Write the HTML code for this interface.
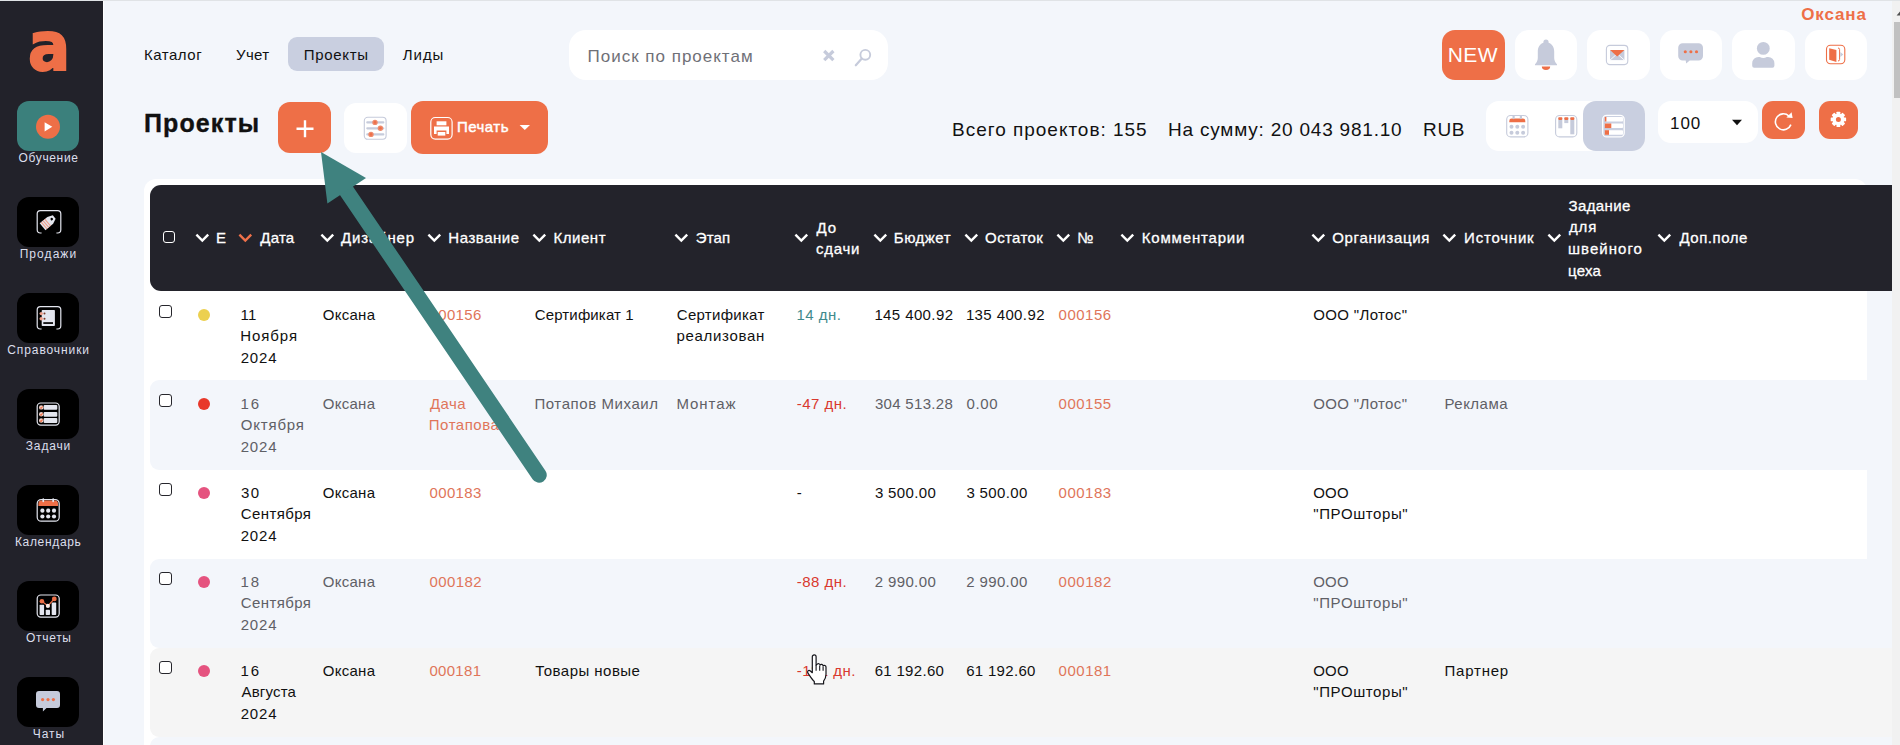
<!DOCTYPE html>
<html lang="ru"><head><meta charset="utf-8"><title>Проекты</title>
<style>
*{box-sizing:border-box}
html,body{margin:0;padding:0}
body{width:1900px;height:745px;overflow:hidden;position:relative;background:#f3f6fb;font-family:"Liberation Sans", sans-serif;}
.app{position:absolute;left:0;top:0;width:1900px;height:745px;overflow:hidden}
.topline{position:absolute;left:0;top:0;width:1900px;height:1px;background:#e0e3e6;z-index:5}
.t{position:absolute;white-space:pre;display:block}
.abs{position:absolute;display:block}
.logo{position:absolute;display:block;font-family:"DejaVu Sans","Liberation Sans",sans-serif;font-weight:700;transform:scaleX(.92);transform-origin:0 0}
.sidebar{position:absolute;left:0;top:0;width:104px;height:745px;background:#22222a;border-right:1px solid #fff}
.tile{position:absolute;left:17px;width:62px;height:50px;border-radius:12px;display:block}
.tile svg{display:block}
.pill{position:absolute;background:#c9cfe0;border-radius:9px;display:block}
.search{position:absolute;background:#fff;border-radius:17px}
.btn{position:absolute;display:block}
.btn.o{background:#ee6f47}
.btn.w{background:#fff}
.card{position:absolute;background:#fff;border-radius:12px}
.thead{position:absolute;background:#23232b;border-radius:11px 0 0 11px}
.row{position:absolute;left:150px;width:1742px;border-radius:9px 0 0 9px}
.cb{position:absolute;width:13px;height:12.500px;border:1.600px solid #26262c;border-radius:3px;background:#fff;display:block}
.cb.h{width:12.400px;height:12px;border:1.200px solid #fff;background:transparent}
.dot{position:absolute;width:12px;height:12px;border-radius:50%;display:block}
.sbar{position:absolute;left:1892px;top:0;width:8px;height:745px;background:#f1f1f1}
.sbar i{position:absolute;left:2px;top:22px;width:6px;height:76px;background:#c1c1c1;display:block}
</style></head>
<body><div class="app"><div class="topline"></div>
<header class="topbar">
<nav>
<span class="t" style="left:144.0px;top:44px;font-size:15px;line-height:21px;color:#111;letter-spacing:0.52px;">Каталог</span>
<span class="t" style="left:236.1px;top:44px;font-size:15px;line-height:21px;color:#111;letter-spacing:0.30px;">Учет</span>
<span class="pill" style="left:288px;top:37px;width:96px;height:34px"></span>
<span class="t" style="left:303.8px;top:44px;font-size:15px;line-height:21px;color:#111;letter-spacing:0.69px;">Проекты</span>
<span class="t" style="left:402.8px;top:44px;font-size:15px;line-height:21px;color:#111;letter-spacing:0.94px;">Лиды</span>
</nav>
<div class="search" style="left:569px;top:30px;width:319px;height:50px">
</div>
<span class="t" style="left:587.6px;top:45px;font-size:17px;line-height:23px;color:#6f7077;letter-spacing:0.99px;">Поиск по проектам</span>
<svg class="abs" style="left:820px;top:47px" width="18" height="18" viewBox="0 0 18 18"><path d="M4.2 4 L13.4 13.2 M13.4 4 L4.2 13.2" stroke="#c6cbdb" stroke-width="3.2"/></svg>
<svg class="abs" style="left:852px;top:45px" width="24" height="24" viewBox="0 0 24 24"><circle cx="13.3" cy="9.8" r="4.9" fill="none" stroke="#c6cbdb" stroke-width="1.9"/><path d="M9.8 13.6 L3.8 20.3" stroke="#c6cbdb" stroke-width="2.2" stroke-linecap="round"/></svg>
<span class="t" style="left:1801.3px;top:3px;font-size:17px;line-height:23px;font-weight:700;color:#ee6f47;letter-spacing:0.85px;">Оксана</span>
<a class="btn o" style="left:1442px;top:30px;width:63px;height:50px;border-radius:13px"></a>
<span class="t" style="left:1447.8px;top:41px;font-size:21px;line-height:27px;color:#fff;letter-spacing:0.40px;">NEW</span>
<a class="btn w" style="left:1514.5px;top:30px;width:62.5px;height:50px;border-radius:14px"></a>
<a class="btn w" style="left:1587px;top:30px;width:62.5px;height:50px;border-radius:14px"></a>
<a class="btn w" style="left:1659.5px;top:30px;width:62.5px;height:50px;border-radius:14px"></a>
<a class="btn w" style="left:1732px;top:30px;width:62.5px;height:50px;border-radius:14px"></a>
<a class="btn w" style="left:1804.5px;top:30px;width:62.5px;height:50px;border-radius:14px"></a>
<svg class="abs" style="left:1530px;top:36px" width="32" height="38" viewBox="0 0 32 38"><path d="M16 3.6 a2.6 2.6 0 0 1 2.6 2.6 v.5 c3.6 1.3 5.6 4.6 5.6 8.8 v6.5 c0 2.6 1.2 4.6 2.8 6.3 v.9 h-22 v-.9 c1.6 -1.7 2.8 -3.7 2.8 -6.3 v-6.5 c0 -4.2 2 -7.5 5.6 -8.8 v-.5 a2.6 2.6 0 0 1 2.6 -2.6 z" fill="#c6cbdb"/><path d="M11.8 30.6 h8.4 a4.2 3.4 0 0 1 -8.4 0 z" fill="#ee6f47"/></svg>
<svg class="abs" style="left:1604px;top:43px" width="26" height="24" viewBox="0 0 26 24"><rect x="2.4" y="2.4" width="21.4" height="19.2" rx="3.5" fill="none" stroke="#c6cbdb" stroke-width="1.1"/><rect x="6" y="7.3" width="14.4" height="9.8" fill="#c6cbdb"/><path d="M6 17.1 L11.8 12 M20.4 17.1 L14.6 12" stroke="#fff" stroke-width=".9"/><path d="M6 7.1 h14.4 L13.2 13.4 z" fill="#ee6f47"/></svg>
<svg class="abs" style="left:1676px;top:41px" width="30" height="26" viewBox="0 0 30 26"><path d="M6.7 2.2 h15.8 a4.5 4.5 0 0 1 4.5 4.5 v8.3 a4.5 4.5 0 0 1 -4.5 4.5 h-8.8 l-3.5 3 l-.5 -3 h-3 a4.5 4.5 0 0 1 -4.5 -4.5 v-8.3 a4.5 4.5 0 0 1 4.5 -4.5 z" fill="#c6cbdb"/><circle cx="9.3" cy="10.8" r="1.55" fill="#ee6f47"/><circle cx="14.9" cy="10.8" r="1.55" fill="#ee6f47"/><circle cx="20.5" cy="10.8" r="1.55" fill="#ee6f47"/></svg>
<svg class="abs" style="left:1750px;top:40px" width="28" height="30" viewBox="0 0 28 30"><circle cx="13.3" cy="8.4" r="6.4" fill="#c6cbdb"/><path d="M4.2 27.7 a2 2 0 0 1 -2 -2 v-2.5 a6.3 6.3 0 0 1 6.3 -6.3 h1.3 a7 7 0 0 0 7 0 h1.3 a6.3 6.3 0 0 1 6.3 6.3 v2.5 a2 2 0 0 1 -2 2 z" fill="#c6cbdb" /></svg>
<svg class="abs" style="left:1824px;top:43px" width="24" height="24" viewBox="0 0 24 24"><rect x="2.5" y="2.3" width="18.3" height="18.5" rx="4" fill="none" stroke="#ee6f47" stroke-width="1.1"/><path d="M14 5 a1.6 1.6 0 0 1 1.6 1.6 v9.8 a1.6 1.6 0 0 1 -1.6 1.6" fill="none" stroke="#ee6f47" stroke-width="1"/><path d="M5.2 5.3 l7.2 1.7 v12 l-7.2 -2.3 z" fill="#ee6f47"/><path d="M16.3 9 l3 2.5 l-3 2.5 z" fill="#c6cbdb"/></svg>
</header>
<section class="toolbar">
<span class="t h1" style="left:144.0px;top:107px;font-size:25px;line-height:32px;font-weight:700;color:#111;letter-spacing:1.10px;-webkit-text-stroke:.35px #111;">Проекты</span>
<a class="btn o" style="left:278px;top:102px;width:53px;height:51px;border-radius:12px"></a>
<svg class="abs" style="left:294px;top:118px" width="22" height="22" viewBox="0 0 22 22"><path d="M11 2.3 v17 M2.5 10.8 h17" stroke="#fff" stroke-width="2.4"/></svg>
<a class="btn w" style="left:344px;top:103px;width:63px;height:50px;border-radius:12px"></a>
<svg class="abs" style="left:362px;top:115px" width="26" height="26" viewBox="0 0 26 26"><rect x="2.3" y="2.3" width="21.8" height="22" rx="3.5" fill="none" stroke="#c6cbdb" stroke-width="1.1"/><path d="M5.3 7.4 h16 M5.3 13.3 h16 M5.3 19.4 h16" stroke="#c6cbdb" stroke-width="2.2" stroke-linecap="round"/><circle cx="13" cy="7.4" r="2.7" fill="#ee8a6c"/><circle cx="18.4" cy="13.3" r="2.7" fill="#ee8a6c"/><circle cx="9" cy="19.4" r="2.7" fill="#ee8a6c"/><circle cx="13" cy="7.4" r="1.3" fill="#ee6f47"/><circle cx="18.4" cy="13.3" r="1.3" fill="#ee6f47"/><circle cx="9" cy="19.4" r="1.3" fill="#ee6f47"/></svg>
<a class="btn o" style="left:411px;top:101px;width:137px;height:53px;border-radius:12px"></a>
<svg class="abs" style="left:428px;top:115px" width="26" height="26" viewBox="0 0 26 26"><rect x="2.8" y="2.5" width="21.3" height="21.6" rx="4.5" fill="none" stroke="#fff" stroke-width="1.2"/><rect x="8.6" y="6.3" width="9.8" height="4" fill="#fff"/><path d="M6 11.6 h15 v7.3 h-2.6 v-3.4 h-9.8 v3.4 h-2.6 z" fill="#fff"/><rect x="9.7" y="17" width="7.6" height="3.6" fill="#fff"/></svg>
<span class="t" style="left:456.9px;top:116px;font-size:15px;line-height:21px;color:#fff;letter-spacing:0.50px;-webkit-text-stroke:.45px #fff;">Печать</span>
<svg class="abs" style="left:518px;top:123px" width="14" height="9" viewBox="0 0 14 9"><path d="M1.6 2 h10.4 l-5.2 5 z" fill="#fff"/></svg>
<span class="t" style="left:952.0px;top:117px;font-size:19px;line-height:25px;color:#111;letter-spacing:0.98px;">Всего проектов: 155</span>
<span class="t" style="left:1168.0px;top:117px;font-size:19px;line-height:25px;color:#111;letter-spacing:0.79px;">На сумму: 20 043 981.10</span>
<span class="t" style="left:1423.0px;top:117px;font-size:19px;line-height:25px;color:#111;letter-spacing:0.67px;">RUB</span>
<div class="btn w" style="left:1486px;top:101px;width:159px;height:50px;border-radius:13px"></div>
<a class="pill" style="left:1583px;top:101px;width:62px;height:50px;border-radius:13px"></a>
<svg class="abs" style="left:1504px;top:113px" width="26" height="26" viewBox="0 0 26 26"><rect x="2.7" y="2.5" width="21.2" height="21.4" rx="4" fill="none" stroke="#c6cbdb" stroke-width="1.1"/><path d="M5.3 9.3 v-1.3 a2.4 2.4 0 0 1 2.4 -2.4 h11.2 a2.4 2.4 0 0 1 2.4 2.4 v1.3 z" fill="#ee6f47"/><rect x="8.5" y="2" width="2.2" height="4.2" rx="1.1" fill="#c6cbdb"/><rect x="15.8" y="2" width="2.2" height="4.2" rx="1.1" fill="#c6cbdb"/><circle cx="7.5" cy="13.8" r="2" fill="#c6cbdb"/><circle cx="13.3" cy="13.8" r="2" fill="#c6cbdb"/><circle cx="19.1" cy="13.8" r="2" fill="#c6cbdb"/><circle cx="7.5" cy="19.8" r="2" fill="#c6cbdb"/><circle cx="13.3" cy="19.8" r="2" fill="#c6cbdb"/><circle cx="19.1" cy="19.8" r="2" fill="#c6cbdb"/></svg>
<svg class="abs" style="left:1553px;top:113px" width="26" height="26" viewBox="0 0 26 26"><rect x="2.6" y="2.5" width="21.2" height="21.4" rx="4" fill="none" stroke="#c6cbdb" stroke-width="1.1"/><rect x="5.3" y="4.8" width="4" height="10.5" fill="#c6cbdb"/><rect x="11.3" y="4.8" width="4" height="5.3" fill="#c6cbdb"/><rect x="17.3" y="4.8" width="4" height="16.5" fill="#c6cbdb"/><rect x="5.3" y="4.3" width="4" height="2.6" rx=".8" fill="#ee6f47"/><rect x="11.3" y="4.3" width="4" height="2.6" rx=".8" fill="#ee6f47"/><rect x="17.3" y="4.3" width="4" height="2.6" rx=".8" fill="#ee6f47"/></svg>
<svg class="abs" style="left:1600px;top:113px" width="26" height="26" viewBox="0 0 26 26"><rect x="2.7" y="2.3" width="21.5" height="21.6" rx="4" fill="none" stroke="#fff" stroke-width="1.3"/><rect x="4.8" y="3.9" width="18.2" height="4.6" rx=".8" fill="#fff"/><rect x="4.8" y="3.9" width="1.6" height="4.6" fill="#ee6f47"/><rect x="4.8" y="10.5" width="18.2" height="4.6" rx=".8" fill="#fff"/><rect x="4.8" y="10.5" width="6.5" height="4.6" fill="#ee6f47"/><rect x="4.8" y="17.2" width="18.2" height="4.6" rx=".8" fill="#fff"/><rect x="4.8" y="17.2" width="4.2" height="4.6" fill="#ee6f47"/></svg>
<div class="btn w" style="left:1658px;top:101px;width:100px;height:42px;border-radius:13px"></div>
<span class="t" style="left:1670.1px;top:112px;font-size:17px;line-height:23px;color:#111;letter-spacing:0.89px;">100</span>
<svg class="abs" style="left:1730px;top:118px" width="14" height="9" viewBox="0 0 14 9"><path d="M2 1.8 h10 l-5 5.5 z" fill="#111"/></svg>
<a class="btn o" style="left:1762px;top:101px;width:43px;height:38px;border-radius:11px"></a>
<svg class="abs" style="left:1771px;top:109px" width="26" height="26" viewBox="0 0 26 26"><path d="M17.9 7 A8 8 0 1 0 19.9 15.6" fill="none" stroke="#fff" stroke-width="1.6"/><path d="M15.4 8.6 L21.6 9 L20.6 3.2 Z" fill="#fff"/></svg>
<a class="btn o" style="left:1819px;top:101px;width:39px;height:38px;border-radius:11px"></a>
<svg class="abs" style="left:1828px;top:109px" width="22" height="22" viewBox="-11 -11 22 22"><g transform="translate(-.6 -.6)"><rect x="-1.9" y="-7.7" width="3.8" height="4" rx=".6" transform="rotate(0)" fill="#fff"/><rect x="-1.9" y="-7.7" width="3.8" height="4" rx=".6" transform="rotate(45)" fill="#fff"/><rect x="-1.9" y="-7.7" width="3.8" height="4" rx=".6" transform="rotate(90)" fill="#fff"/><rect x="-1.9" y="-7.7" width="3.8" height="4" rx=".6" transform="rotate(135)" fill="#fff"/><rect x="-1.9" y="-7.7" width="3.8" height="4" rx=".6" transform="rotate(180)" fill="#fff"/><rect x="-1.9" y="-7.7" width="3.8" height="4" rx=".6" transform="rotate(225)" fill="#fff"/><rect x="-1.9" y="-7.7" width="3.8" height="4" rx=".6" transform="rotate(270)" fill="#fff"/><rect x="-1.9" y="-7.7" width="3.8" height="4" rx=".6" transform="rotate(315)" fill="#fff"/><circle r="4.2" fill="none" stroke="#fff" stroke-width="3.4"/></g></svg>
</section>
<main class="tablewrap">
<div class="card" style="left:144px;top:179px;width:1723px;height:600px"></div>
<div class="row" style="top:380px;height:89.5px;background:#f3f6fb"></div>
<div class="row" style="top:558.5px;height:89px;background:#f3f6fb"></div>
<div class="row" style="top:647.5px;height:89px;background:#f5f5f5"></div>
<div class="row" style="top:736.5px;height:30px;background:#f3f6fb"></div>
<div class="thead" style="left:150px;top:185px;width:1742px;height:105.7px"></div>
<span class="cb h" style="left:162.8px;top:231.2px"></span>
<svg class="abs" style="left:193.5px;top:232.3px" width="17" height="12" viewBox="0 0 17 12"><path d="M2.4 2.7 L8.3 8.6 L14.2 2.7" fill="none" stroke="#fff" stroke-width="2.4"/></svg>
<span class="t" style="left:216.1px;top:227px;font-size:15px;line-height:21px;color:#fff;-webkit-text-stroke:.3px #fff;">Е</span>
<svg class="abs" style="left:237.3px;top:232.3px" width="17" height="12" viewBox="0 0 17 12"><path d="M2.4 2.7 L8.3 8.6 L14.2 2.7" fill="none" stroke="#f0714a" stroke-width="2.4"/></svg>
<span class="t" style="left:260.3px;top:227px;font-size:15px;line-height:21px;color:#fff;letter-spacing:0.23px;-webkit-text-stroke:.3px #fff;">Дата</span>
<svg class="abs" style="left:318.5px;top:232.3px" width="17" height="12" viewBox="0 0 17 12"><path d="M2.4 2.7 L8.3 8.6 L14.2 2.7" fill="none" stroke="#fff" stroke-width="2.4"/></svg>
<span class="t" style="left:340.9px;top:227px;font-size:15px;line-height:21px;color:#fff;letter-spacing:0.88px;-webkit-text-stroke:.3px #fff;">Дизайнер</span>
<svg class="abs" style="left:425.6px;top:232.3px" width="17" height="12" viewBox="0 0 17 12"><path d="M2.4 2.7 L8.3 8.6 L14.2 2.7" fill="none" stroke="#fff" stroke-width="2.4"/></svg>
<span class="t" style="left:448.3px;top:227px;font-size:15px;line-height:21px;color:#fff;letter-spacing:0.54px;-webkit-text-stroke:.3px #fff;">Название</span>
<svg class="abs" style="left:530.9px;top:232.3px" width="17" height="12" viewBox="0 0 17 12"><path d="M2.4 2.7 L8.3 8.6 L14.2 2.7" fill="none" stroke="#fff" stroke-width="2.4"/></svg>
<span class="t" style="left:553.5px;top:227px;font-size:15px;line-height:21px;color:#fff;letter-spacing:0.54px;-webkit-text-stroke:.3px #fff;">Клиент</span>
<svg class="abs" style="left:673px;top:232.3px" width="17" height="12" viewBox="0 0 17 12"><path d="M2.4 2.7 L8.3 8.6 L14.2 2.7" fill="none" stroke="#fff" stroke-width="2.4"/></svg>
<span class="t" style="left:695.8px;top:227px;font-size:15px;line-height:21px;color:#fff;letter-spacing:0.09px;-webkit-text-stroke:.3px #fff;">Этап</span>
<svg class="abs" style="left:871.7px;top:232.3px" width="17" height="12" viewBox="0 0 17 12"><path d="M2.4 2.7 L8.3 8.6 L14.2 2.7" fill="none" stroke="#fff" stroke-width="2.4"/></svg>
<span class="t" style="left:893.8px;top:227px;font-size:15px;line-height:21px;color:#fff;letter-spacing:0.50px;-webkit-text-stroke:.3px #fff;">Бюджет</span>
<svg class="abs" style="left:962.5px;top:232.3px" width="17" height="12" viewBox="0 0 17 12"><path d="M2.4 2.7 L8.3 8.6 L14.2 2.7" fill="none" stroke="#fff" stroke-width="2.4"/></svg>
<span class="t" style="left:985.1px;top:227px;font-size:15px;line-height:21px;color:#fff;letter-spacing:0.37px;-webkit-text-stroke:.3px #fff;">Остаток</span>
<svg class="abs" style="left:1055.3px;top:232.3px" width="17" height="12" viewBox="0 0 17 12"><path d="M2.4 2.7 L8.3 8.6 L14.2 2.7" fill="none" stroke="#fff" stroke-width="2.4"/></svg>
<span class="t" style="left:1077.6px;top:227px;font-size:15px;line-height:21px;color:#fff;-webkit-text-stroke:.3px #fff;">№</span>
<svg class="abs" style="left:1119px;top:232.3px" width="17" height="12" viewBox="0 0 17 12"><path d="M2.4 2.7 L8.3 8.6 L14.2 2.7" fill="none" stroke="#fff" stroke-width="2.4"/></svg>
<span class="t" style="left:1141.7px;top:227px;font-size:15px;line-height:21px;color:#fff;letter-spacing:0.83px;-webkit-text-stroke:.3px #fff;">Комментарии</span>
<svg class="abs" style="left:1309.5px;top:232.3px" width="17" height="12" viewBox="0 0 17 12"><path d="M2.4 2.7 L8.3 8.6 L14.2 2.7" fill="none" stroke="#fff" stroke-width="2.4"/></svg>
<span class="t" style="left:1332.2px;top:227px;font-size:15px;line-height:21px;color:#fff;letter-spacing:0.68px;-webkit-text-stroke:.3px #fff;">Организация</span>
<svg class="abs" style="left:1441.4px;top:232.3px" width="17" height="12" viewBox="0 0 17 12"><path d="M2.4 2.7 L8.3 8.6 L14.2 2.7" fill="none" stroke="#fff" stroke-width="2.4"/></svg>
<span class="t" style="left:1464.1px;top:227px;font-size:15px;line-height:21px;color:#fff;letter-spacing:0.79px;-webkit-text-stroke:.3px #fff;">Источник</span>
<svg class="abs" style="left:1656.4px;top:232.3px" width="17" height="12" viewBox="0 0 17 12"><path d="M2.4 2.7 L8.3 8.6 L14.2 2.7" fill="none" stroke="#fff" stroke-width="2.4"/></svg>
<span class="t" style="left:1679.4px;top:227px;font-size:15px;line-height:21px;color:#fff;letter-spacing:0.55px;-webkit-text-stroke:.3px #fff;">Доп.поле</span>
<svg class="abs" style="left:793.2px;top:232.3px" width="17" height="12" viewBox="0 0 17 12"><path d="M2.4 2.7 L8.3 8.6 L14.2 2.7" fill="none" stroke="#fff" stroke-width="2.4"/></svg>
<span class="t" style="left:816.5px;top:217px;font-size:15px;line-height:21px;color:#fff;letter-spacing:0.97px;-webkit-text-stroke:.3px #fff;">До</span>
<span class="t" style="left:816.0px;top:238px;font-size:15px;line-height:21px;color:#fff;letter-spacing:0.75px;-webkit-text-stroke:.3px #fff;">сдачи</span>
<svg class="abs" style="left:1545.9px;top:232.3px" width="17" height="12" viewBox="0 0 17 12"><path d="M2.4 2.7 L8.3 8.6 L14.2 2.7" fill="none" stroke="#fff" stroke-width="2.4"/></svg>
<span class="t" style="left:1568.5px;top:195px;font-size:15px;line-height:21px;color:#fff;letter-spacing:0.39px;-webkit-text-stroke:.3px #fff;">Задание</span>
<span class="t" style="left:1568.9px;top:216px;font-size:15px;line-height:21px;color:#fff;letter-spacing:0.92px;-webkit-text-stroke:.3px #fff;">для</span>
<span class="t" style="left:1568.0px;top:238px;font-size:15px;line-height:21px;color:#fff;letter-spacing:1.04px;-webkit-text-stroke:.3px #fff;">швейного</span>
<span class="t" style="left:1568.0px;top:260px;font-size:15px;line-height:21px;color:#fff;letter-spacing:0.24px;-webkit-text-stroke:.3px #fff;">цеха</span>
<span class="cb" style="left:158.5px;top:305px"></span>
<span class="dot" style="left:198px;top:309.3px;background:#ecd04f"></span>
<span class="t" style="left:240.4px;top:304px;font-size:15px;line-height:21px;color:#111;letter-spacing:0.50px;">11</span>
<span class="t" style="left:240.3px;top:325px;font-size:15px;line-height:21px;color:#111;letter-spacing:0.92px;">Ноября</span>
<span class="t" style="left:240.7px;top:347px;font-size:15px;line-height:21px;color:#111;letter-spacing:0.81px;">2024</span>
<span class="t" style="left:322.8px;top:304px;font-size:15px;line-height:21px;color:#111;letter-spacing:0.27px;">Оксана</span>
<span class="t" style="left:429.4px;top:304px;font-size:15px;line-height:21px;color:#e0755a;letter-spacing:0.40px;">000156</span>
<span class="t" style="left:534.8px;top:304px;font-size:15px;line-height:21px;color:#111;letter-spacing:0.13px;">Сертификат 1</span>
<span class="t" style="left:676.8px;top:304px;font-size:15px;line-height:21px;color:#111;letter-spacing:0.28px;">Сертификат</span>
<span class="t" style="left:676.6px;top:325px;font-size:15px;line-height:21px;color:#111;letter-spacing:0.66px;">реализован</span>
<span class="t" style="left:796.4px;top:304px;font-size:15px;line-height:21px;color:#3f8a8c;letter-spacing:0.51px;">14 дн.</span>
<span class="t" style="left:874.4px;top:304px;font-size:15px;line-height:21px;color:#111;letter-spacing:0.39px;">145 400.92</span>
<span class="t" style="left:965.9px;top:304px;font-size:15px;line-height:21px;color:#111;letter-spacing:0.39px;">135 400.92</span>
<span class="t" style="left:1058.6px;top:304px;font-size:15px;line-height:21px;color:#e0755a;letter-spacing:0.50px;">000156</span>
<span class="t" style="left:1313.2px;top:304px;font-size:15px;line-height:21px;color:#111;letter-spacing:0.36px;">ООО &quot;Лотос&quot;</span>
<span class="cb" style="left:158.5px;top:394px"></span>
<span class="dot" style="left:198px;top:398.3px;background:#e8382a"></span>
<span class="t" style="left:240.4px;top:393px;font-size:15px;line-height:21px;color:#5f6066;letter-spacing:2.11px;">16</span>
<span class="t" style="left:240.8px;top:414px;font-size:15px;line-height:21px;color:#5f6066;letter-spacing:0.81px;">Октября</span>
<span class="t" style="left:240.7px;top:436px;font-size:15px;line-height:21px;color:#5f6066;letter-spacing:0.81px;">2024</span>
<span class="t" style="left:322.8px;top:393px;font-size:15px;line-height:21px;color:#5f6066;letter-spacing:0.27px;">Оксана</span>
<span class="t" style="left:429.9px;top:393px;font-size:15px;line-height:21px;color:#e0755a;letter-spacing:0.49px;">Дача</span>
<span class="t" style="left:428.8px;top:414px;font-size:15px;line-height:21px;color:#e0755a;letter-spacing:0.52px;">Потапова</span>
<span class="t" style="left:534.4px;top:393px;font-size:15px;line-height:21px;color:#5f6066;letter-spacing:0.58px;">Потапов Михаил</span>
<span class="t" style="left:676.4px;top:393px;font-size:15px;line-height:21px;color:#5f6066;letter-spacing:0.94px;">Монтаж</span>
<span class="t" style="left:796.8px;top:393px;font-size:15px;line-height:21px;color:#d9392f;letter-spacing:0.48px;">-47 дн.</span>
<span class="t" style="left:874.9px;top:393px;font-size:15px;line-height:21px;color:#5f6066;letter-spacing:0.32px;">304 513.28</span>
<span class="t" style="left:966.4px;top:393px;font-size:15px;line-height:21px;color:#5f6066;letter-spacing:0.69px;">0.00</span>
<span class="t" style="left:1058.6px;top:393px;font-size:15px;line-height:21px;color:#e0755a;letter-spacing:0.49px;">000155</span>
<span class="t" style="left:1313.2px;top:393px;font-size:15px;line-height:21px;color:#5f6066;letter-spacing:0.36px;">ООО &quot;Лотос&quot;</span>
<span class="t" style="left:1444.5px;top:393px;font-size:15px;line-height:21px;color:#5f6066;letter-spacing:0.48px;">Реклама</span>
<span class="cb" style="left:158.5px;top:483px"></span>
<span class="dot" style="left:198px;top:487.3px;background:#e5537f"></span>
<span class="t" style="left:240.9px;top:482px;font-size:15px;line-height:21px;color:#111;letter-spacing:1.47px;">30</span>
<span class="t" style="left:240.7px;top:503px;font-size:15px;line-height:21px;color:#111;letter-spacing:0.42px;">Сентября</span>
<span class="t" style="left:240.7px;top:525px;font-size:15px;line-height:21px;color:#111;letter-spacing:0.81px;">2024</span>
<span class="t" style="left:322.8px;top:482px;font-size:15px;line-height:21px;color:#111;letter-spacing:0.27px;">Оксана</span>
<span class="t" style="left:429.4px;top:482px;font-size:15px;line-height:21px;color:#e0755a;letter-spacing:0.40px;">000183</span>
<span class="t" style="left:796.8px;top:482px;font-size:15px;line-height:21px;color:#111;">-</span>
<span class="t" style="left:874.9px;top:482px;font-size:15px;line-height:21px;color:#111;letter-spacing:0.35px;">3 500.00</span>
<span class="t" style="left:966.4px;top:482px;font-size:15px;line-height:21px;color:#111;letter-spacing:0.35px;">3 500.00</span>
<span class="t" style="left:1058.6px;top:482px;font-size:15px;line-height:21px;color:#e0755a;letter-spacing:0.50px;">000183</span>
<span class="t" style="left:1313.2px;top:482px;font-size:15px;line-height:21px;color:#111;letter-spacing:0.21px;">ООО</span>
<span class="t" style="left:1313.3px;top:503px;font-size:15px;line-height:21px;color:#111;letter-spacing:0.60px;">&quot;ПРОшторы&quot;</span>
<span class="cb" style="left:158.5px;top:572px"></span>
<span class="dot" style="left:198px;top:576.3px;background:#e5537f"></span>
<span class="t" style="left:240.4px;top:571px;font-size:15px;line-height:21px;color:#5f6066;letter-spacing:2.11px;">18</span>
<span class="t" style="left:240.7px;top:592px;font-size:15px;line-height:21px;color:#5f6066;letter-spacing:0.42px;">Сентября</span>
<span class="t" style="left:240.7px;top:614px;font-size:15px;line-height:21px;color:#5f6066;letter-spacing:0.81px;">2024</span>
<span class="t" style="left:322.8px;top:571px;font-size:15px;line-height:21px;color:#5f6066;letter-spacing:0.27px;">Оксана</span>
<span class="t" style="left:429.4px;top:571px;font-size:15px;line-height:21px;color:#e0755a;letter-spacing:0.42px;">000182</span>
<span class="t" style="left:796.8px;top:571px;font-size:15px;line-height:21px;color:#d9392f;letter-spacing:0.48px;">-88 дн.</span>
<span class="t" style="left:874.7px;top:571px;font-size:15px;line-height:21px;color:#5f6066;letter-spacing:0.38px;">2 990.00</span>
<span class="t" style="left:966.2px;top:571px;font-size:15px;line-height:21px;color:#5f6066;letter-spacing:0.38px;">2 990.00</span>
<span class="t" style="left:1058.6px;top:571px;font-size:15px;line-height:21px;color:#e0755a;letter-spacing:0.52px;">000182</span>
<span class="t" style="left:1313.2px;top:571px;font-size:15px;line-height:21px;color:#5f6066;letter-spacing:0.21px;">ООО</span>
<span class="t" style="left:1313.3px;top:592px;font-size:15px;line-height:21px;color:#5f6066;letter-spacing:0.60px;">&quot;ПРОшторы&quot;</span>
<span class="cb" style="left:158.5px;top:661px"></span>
<span class="dot" style="left:198px;top:665.3px;background:#e5537f"></span>
<span class="t" style="left:240.4px;top:660px;font-size:15px;line-height:21px;color:#111;letter-spacing:2.11px;">16</span>
<span class="t" style="left:241.5px;top:681px;font-size:15px;line-height:21px;color:#111;letter-spacing:0.18px;">Августа</span>
<span class="t" style="left:240.7px;top:703px;font-size:15px;line-height:21px;color:#111;letter-spacing:0.81px;">2024</span>
<span class="t" style="left:322.8px;top:660px;font-size:15px;line-height:21px;color:#111;letter-spacing:0.27px;">Оксана</span>
<span class="t" style="left:429.4px;top:660px;font-size:15px;line-height:21px;color:#e0755a;letter-spacing:0.31px;">000181</span>
<span class="t" style="left:535.3px;top:660px;font-size:15px;line-height:21px;color:#111;letter-spacing:0.47px;">Товары новые</span>
<span class="t" style="left:796.8px;top:660px;font-size:15px;line-height:21px;color:#d9392f;letter-spacing:0.45px;">-121 дн.</span>
<span class="t" style="left:874.7px;top:660px;font-size:15px;line-height:21px;color:#111;letter-spacing:0.31px;">61 192.60</span>
<span class="t" style="left:966.2px;top:660px;font-size:15px;line-height:21px;color:#111;letter-spacing:0.31px;">61 192.60</span>
<span class="t" style="left:1058.6px;top:660px;font-size:15px;line-height:21px;color:#e0755a;letter-spacing:0.51px;">000181</span>
<span class="t" style="left:1313.2px;top:660px;font-size:15px;line-height:21px;color:#111;letter-spacing:0.21px;">ООО</span>
<span class="t" style="left:1313.3px;top:681px;font-size:15px;line-height:21px;color:#111;letter-spacing:0.60px;">&quot;ПРОшторы&quot;</span>
<span class="t" style="left:1444.5px;top:660px;font-size:15px;line-height:21px;color:#111;letter-spacing:0.78px;">Партнер</span>
</main>
<aside class="sidebar">
<span class="logo" style="left:28.2px;top:7.1px;font-size:68px;line-height:80px;color:#ee6f47;-webkit-text-stroke:2px #ee6f47">a</span>
<a class="tile" style="top:101px;background:#3b807c"><svg width="62" height="50" viewBox="0 0 62 50"><circle cx="31" cy="25.7" r="12" fill="#ee6f47"/><path d="M27.6 21.2 L35.3 25.8 L27.6 30.4 Z" fill="#fff"/></svg></a>
<span class="t" style="left:18.5px;top:149px;font-size:12px;line-height:18px;color:#dcdfec;letter-spacing:0.65px;">Обучение</span>
<a class="tile" style="top:197px;background:#000"><svg width="62" height="50" viewBox="0 0 62 50"><path d="M24.6 36 h-1.2 a3.2 3.2 0 0 1 -3.2 -3.2 v-16 a3.2 3.2 0 0 1 3.2 -3.2 h17.2 a3.2 3.2 0 0 1 3.2 3.2 v16 a3.2 3.2 0 0 1 -3.2 3.2 h-1.2" fill="none" stroke="#e4e6ef" stroke-width="1.2"/><g transform="translate(31.4 24.9) rotate(-40)"><path d="M-7.6 -4.5 H2.4 L7.6 -2.2 V2.2 L2.4 4.5 H-7.6 Z" fill="#e4e6ef"/><circle cx="4.4" cy="0" r="1.25" fill="#000"/><path d="M-5.6 -4.5 v9 M-3.3 -4.5 v9 M-1 -4.5 v9" stroke="#f0a08c" stroke-width="1.15"/></g></svg></a>
<span class="t" style="left:19.7px;top:245px;font-size:12px;line-height:18px;color:#dcdfec;letter-spacing:1.06px;">Продажи</span>
<a class="tile" style="top:293px;background:#000"><svg width="62" height="50" viewBox="0 0 62 50"><path d="M24.6 36 h-1.2 a3.2 3.2 0 0 1 -3.2 -3.2 v-16 a3.2 3.2 0 0 1 3.2 -3.2 h17.2 a3.2 3.2 0 0 1 3.2 3.2 v16 a3.2 3.2 0 0 1 -3.2 3.2 h-1.2" fill="none" stroke="#e4e6ef" stroke-width="1.2"/><rect x="24.7" y="16.9" width="13.2" height="16.1" rx=".8" fill="#e4e6ef"/><rect x="26.3" y="29.2" width="9.7" height="1.7" fill="#000"/><circle cx="24.2" cy="20.6" r="1.7" fill="#f0a08c"/><circle cx="24.2" cy="25.7" r="1.7" fill="#f0a08c"/><circle cx="27.5" cy="20.6" r="1" fill="#7a3a28"/><circle cx="27.5" cy="25.7" r="1" fill="#7a3a28"/></svg></a>
<span class="t" style="left:7.3px;top:341px;font-size:12px;line-height:18px;color:#dcdfec;letter-spacing:0.90px;">Справочники</span>
<a class="tile" style="top:389px;background:#000"><svg width="62" height="50" viewBox="0 0 62 50"><rect x="20.2" y="14" width="22" height="22.2" rx="3.6" fill="none" stroke="#e4e6ef" stroke-width="1.2"/><rect x="26.6" y="16" width="13.7" height="4.8" rx="1" fill="#e4e6ef"/><circle cx="24.2" cy="18.4" r="2.2" fill="#f3d6cf"/><path d="M23.1 18.5 l.9 1 l1.7 -2.2" fill="none" stroke="#ee6f47" stroke-width="1.1"/><rect x="26.6" y="22.9" width="13.7" height="4.8" rx="1" fill="#e4e6ef"/><circle cx="24.2" cy="25.3" r="2.2" fill="#f3d6cf"/><path d="M23.1 25.4 l.9 1 l1.7 -2.2" fill="none" stroke="#ee6f47" stroke-width="1.1"/><rect x="26.6" y="29.1" width="13.7" height="4.8" rx="1" fill="#e4e6ef"/><circle cx="24.2" cy="31.5" r="2.2" fill="#f3d6cf"/><path d="M23.1 31.6 l.9 1 l1.7 -2.2" fill="none" stroke="#ee6f47" stroke-width="1.1"/></svg></a>
<span class="t" style="left:25.8px;top:437px;font-size:12px;line-height:18px;color:#dcdfec;letter-spacing:0.83px;">Задачи</span>
<a class="tile" style="top:485px;background:#000"><svg width="62" height="50" viewBox="0 0 62 50"><rect x="20.2" y="14.6" width="22" height="21.6" rx="4" fill="none" stroke="#e4e6ef" stroke-width="1.2"/><path d="M21.4 21 v-2.4 a3 3 0 0 1 3 -3 h13.6 a3 3 0 0 1 3 3 v2.4 z" fill="#ee6f47"/><rect x="25.4" y="13.2" width="1.7" height="4" rx=".85" fill="#e4e6ef"/><rect x="35.3" y="13.2" width="1.7" height="4" rx=".85" fill="#e4e6ef"/><circle cx="25.4" cy="25.7" r="2.1" fill="#e4e6ef"/><circle cx="31.2" cy="25.7" r="2.1" fill="#e4e6ef"/><circle cx="37" cy="25.7" r="2.1" fill="#e4e6ef"/><circle cx="25.4" cy="31.5" r="2.1" fill="#e4e6ef"/><circle cx="31.2" cy="31.5" r="2.1" fill="#e4e6ef"/><circle cx="37" cy="31.5" r="2.1" fill="#e4e6ef"/></svg></a>
<span class="t" style="left:14.9px;top:533px;font-size:12px;line-height:18px;color:#dcdfec;letter-spacing:0.67px;">Календарь</span>
<a class="tile" style="top:581px;background:#000"><svg width="62" height="50" viewBox="0 0 62 50"><rect x="20.2" y="14" width="22" height="22.2" rx="3.6" fill="none" stroke="#e4e6ef" stroke-width="1.2"/><rect x="22.6" y="23.8" width="4.5" height="10.2" rx=".7" fill="#e4e6ef"/><rect x="28.7" y="28.7" width="4.3" height="5.3" rx=".7" fill="#e4e6ef"/><rect x="34.7" y="21.4" width="4.5" height="12.6" rx=".7" fill="#e4e6ef"/><path d="M24.9 20.3 L30.9 24.9 L37.3 17.9" fill="none" stroke="#ee6f47" stroke-width="1.3"/><circle cx="24.9" cy="20.3" r="2.3" fill="#ee6f47"/><circle cx="30.9" cy="24.9" r="2.1" fill="#fbe9e4"/><circle cx="37.3" cy="17.9" r="2.4" fill="#ee6f47"/></svg></a>
<span class="t" style="left:26.1px;top:629px;font-size:12px;line-height:18px;color:#dcdfec;letter-spacing:0.68px;">Отчеты</span>
<a class="tile" style="top:677px;background:#000"><svg width="62" height="50" viewBox="0 0 62 50"><path d="M22 14 h18 a3 3 0 0 1 3 3 v11 a3 3 0 0 1 -3 3 h-10.5 l-3.6 3.4 v-3.4 h-3.9 a3 3 0 0 1 -3 -3 v-11 a3 3 0 0 1 3 -3 z" fill="#c6cbdb"/><circle cx="25.6" cy="22.6" r="1.6" fill="#ee6f47"/><circle cx="31" cy="22.6" r="1.6" fill="#ee6f47"/><circle cx="36.4" cy="22.6" r="1.6" fill="#ee6f47"/></svg></a>
<span class="t" style="left:32.8px;top:725px;font-size:12px;line-height:18px;color:#dcdfec;letter-spacing:0.91px;">Чаты</span>
</aside>
<svg class="abs" style="left:300px;top:140px;pointer-events:none" width="260" height="350" viewBox="300 140 260 350"><path d="M346.5 190.8 L539 475" stroke="#3f827f" stroke-width="15.5" stroke-linecap="round" fill="none"/><path d="M321 152 L366 177.9 L327.4 203.6 Z" fill="#3f827f"/></svg>
<svg class="abs" style="left:803.5px;top:654px" width="26" height="34" viewBox="0 0 26 34"><path d="M8.3 2.8 a1.9 1.9 0 0 1 3.8 0 v8.3 l1.2 -1 a1.7 1.7 0 0 1 2.8 .9 a1.7 1.7 0 0 1 3 .8 a1.7 1.7 0 0 1 2.9 1.2 v7.3 c0 3.3 -1.3 5.4 -2.4 6.8 v2.8 h-9.3 v-2.4 c-2.3 -2 -4.2 -5.2 -6.3 -8.3 c-1.3 -1.9 .6 -3.5 2.4 -2.2 l1.9 1.7 z" fill="#fff" stroke="#15151a" stroke-width="1.2" stroke-linejoin="round"/><path d="M12.1 11 v5.8 M15.7 11.5 v5.3 M19.1 12.5 v4.3" stroke="#15151a" stroke-width="1.1"/></svg>
<div class="sbar"><i></i><svg class="abs" style="left:3px;top:9px" width="5" height="8" viewBox="0 0 5 8"><path d="M1.6 6.4 L5.2 2.4 L8.8 6.4 z" fill="#505050"/></svg></div>
</div></body></html>
